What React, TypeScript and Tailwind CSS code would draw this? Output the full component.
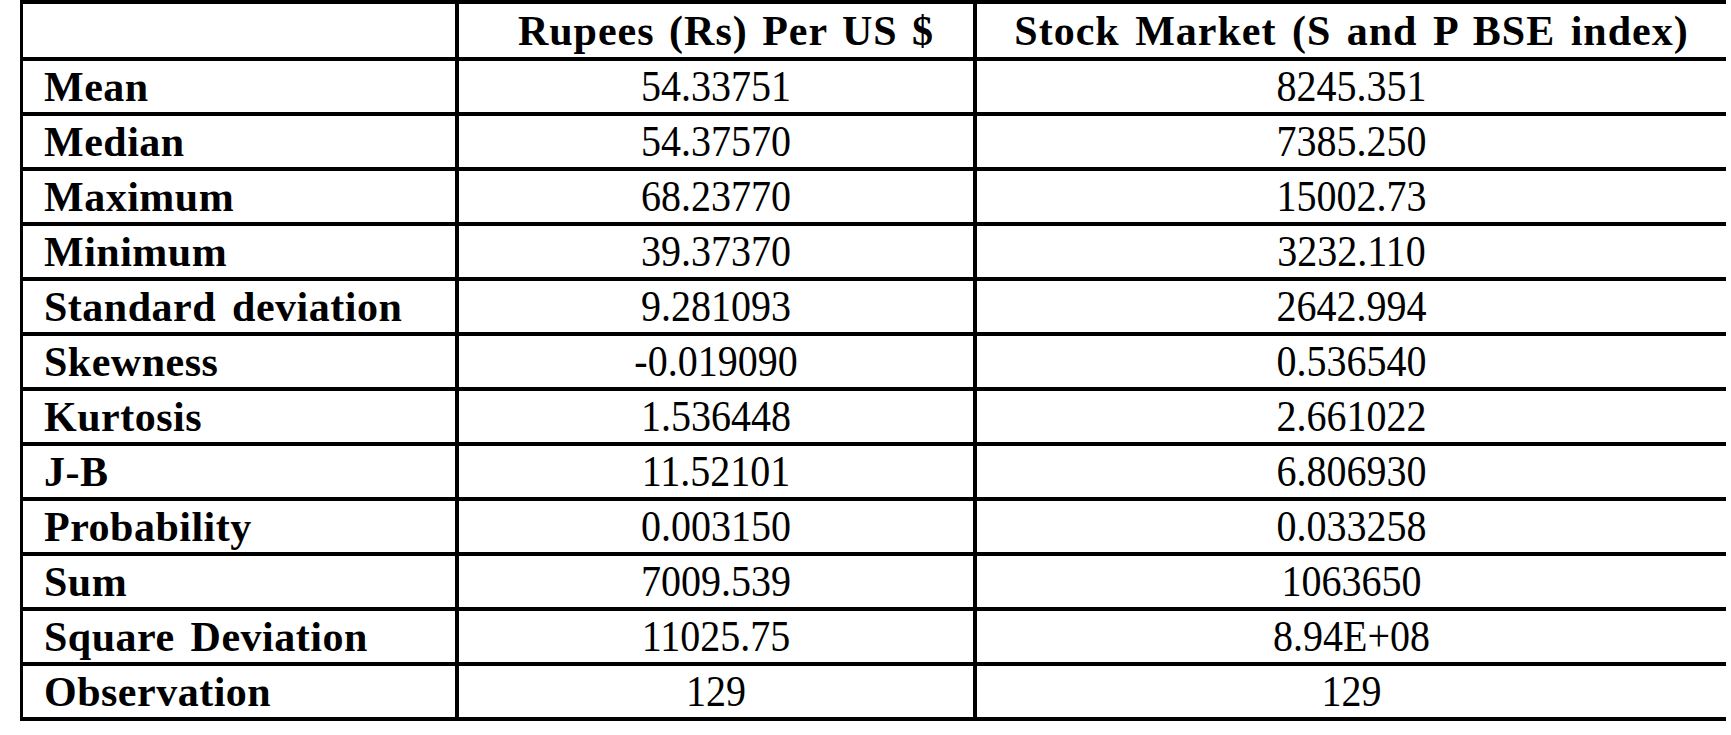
import React from "react";

interface StatRow {
  label: string;
  rupees: string;
  stock: string;
}

const rows: StatRow[] = [
  { label: "Mean", rupees: "54.33751", stock: "8245.351" },
  { label: "Median", rupees: "54.37570", stock: "7385.250" },
  { label: "Maximum", rupees: "68.23770", stock: "15002.73" },
  { label: "Minimum", rupees: "39.37370", stock: "3232.110" },
  { label: "Standard deviation", rupees: "9.281093", stock: "2642.994" },
  { label: "Skewness", rupees: "-0.019090", stock: "0.536540" },
  { label: "Kurtosis", rupees: "1.536448", stock: "2.661022" },
  { label: "J-B", rupees: "11.52101", stock: "6.806930" },
  { label: "Probability", rupees: "0.003150", stock: "0.033258" },
  { label: "Sum", rupees: "7009.539", stock: "1063650" },
  { label: "Square Deviation", rupees: "11025.75", stock: "8.94E+08" },
  { label: "Observation", rupees: "129", stock: "129" },
];

export default function App() {
  return (
    <div className="w-[1731px] h-[735px] bg-white text-black font-['Liberation_Serif',serif]">
      <div className="ml-[20px] w-[1706px] border-t-4 border-black">
        {/* cabecera */}
        <div className="flex border-b-4 border-black h-[57px]">
          <div className="w-[435px] border-l-[3px] border-black" />
          <div className="w-[518px] border-l-4 border-black flex items-center justify-center pl-[20px]">
            <span className="text-[42px] leading-none font-bold tracking-[1px] [word-spacing:3px]">
              Rupees (Rs) Per US $
            </span>
          </div>
          <div className="w-[753px] border-l-4 border-black flex items-center justify-center">
            <span className="text-[42px] leading-none font-bold tracking-[1px] [word-spacing:4px]">
              Stock Market (S and P BSE index)
            </span>
          </div>
        </div>

        {rows.map((row) => (
          <div key={row.label} className="flex border-b-4 border-black h-[55px]">
            <div className="w-[435px] border-l-[3px] border-black flex items-center pl-[21px]">
              <span className="text-[42px] leading-none font-bold tracking-[0.5px] [word-spacing:5px]">
                {row.label}
              </span>
            </div>
            <div className="w-[518px] border-l-4 border-black flex items-center justify-center">
              <span className="inline-block text-[40px] leading-none scale-y-[1.1]">{row.rupees}</span>
            </div>
            <div className="w-[753px] border-l-4 border-black flex items-center justify-center">
              <span className="inline-block text-[40px] leading-none scale-y-[1.1]">{row.stock}</span>
            </div>
          </div>
        ))}
      </div>
    </div>
  );
}
